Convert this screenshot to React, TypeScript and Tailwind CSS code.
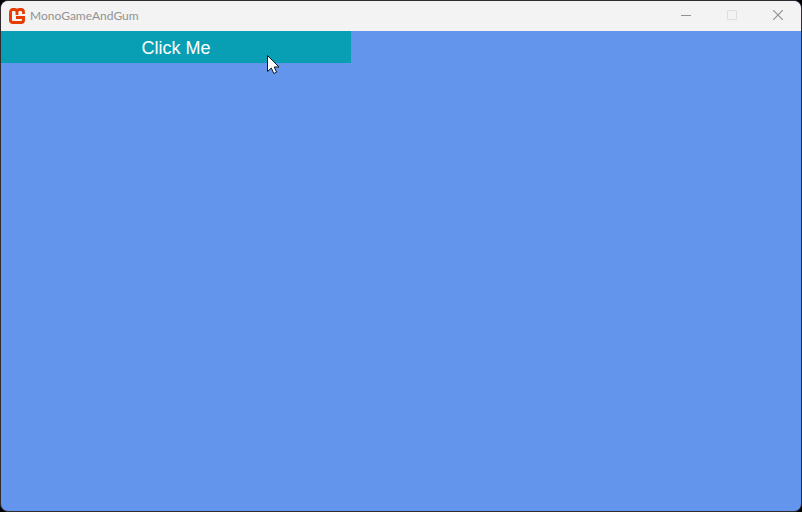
function Logo() {
  return (
    <svg className="size-4 shrink-0" viewBox="0 0 16 16" fill="none" stroke="#e73c00" strokeWidth="3" aria-hidden="true">
      <path d="M8 7V2M1.5 8V4Q1.5 1.5 4 1.5H5.5Q8 1.5 8 4Q8 1.5 10.5 1.5H12Q14.5 1.5 14.5 4V6" strokeWidth="2.8" />
      <path d="M1.5 5V12Q1.5 14.5 4 14.5H12Q14.5 14.5 14.5 12V9.5H7" />
    </svg>
  );
}

function Cursor() {
  return (
    <svg className="absolute top-6 left-[266px] h-5 w-[13px]" viewBox="0 0 13 20" aria-hidden="true">
      <path d="M.5.5V16.5L4.3 13L6.8 18.5L9.6 17.2L7.2 12H12Z" fill="#fff" stroke="#101820" strokeWidth="1" />
    </svg>
  );
}

const control = "flex h-7 w-[46px] items-center justify-center";

export default function App() {
  return (
    <div className="h-screen bg-black font-[Lato,'Noto_Sans',sans-serif]">
      <main className="flex h-full flex-col overflow-hidden rounded-lg border border-[#302b2e] bg-[#6495ed]">
        <header className="flex h-[30px] shrink-0 items-center bg-[#f3f3f3] pl-2 text-[#929292]">
          <Logo />
          <h1 className="ml-[5px] text-xs">MonoGameAndGum</h1>
          <div className="ml-auto flex h-full items-start">
            <button className={control} aria-label="Minimize">
              <svg className="size-[10px]" viewBox="0 0 10 10" stroke="currentColor">
                <path d="M0 5.5H10" />
              </svg>
            </button>
            <button className={control} aria-label="Maximize" disabled>
              <svg className="size-[10px] text-[#dddddd]" viewBox="0 0 10 10" fill="none" stroke="currentColor">
                <rect x=".5" y=".5" width="9" height="9" rx=".5" />
              </svg>
            </button>
            <button className={control} aria-label="Close">
              <svg className="size-[10px]" viewBox="0 0 10 10" stroke="currentColor" strokeWidth="1.2">
                <path d="M0 0L10 10M10 0L0 10" />
              </svg>
            </button>
          </div>
        </header>
        <section className="relative flex-1">
          <button className="block h-8 w-[350px] bg-[#089eb3] pt-px font-['Liberation_Sans',Arial,sans-serif] text-lg text-white">
            Click Me
          </button>
          <Cursor />
        </section>
      </main>
    </div>
  );
}
